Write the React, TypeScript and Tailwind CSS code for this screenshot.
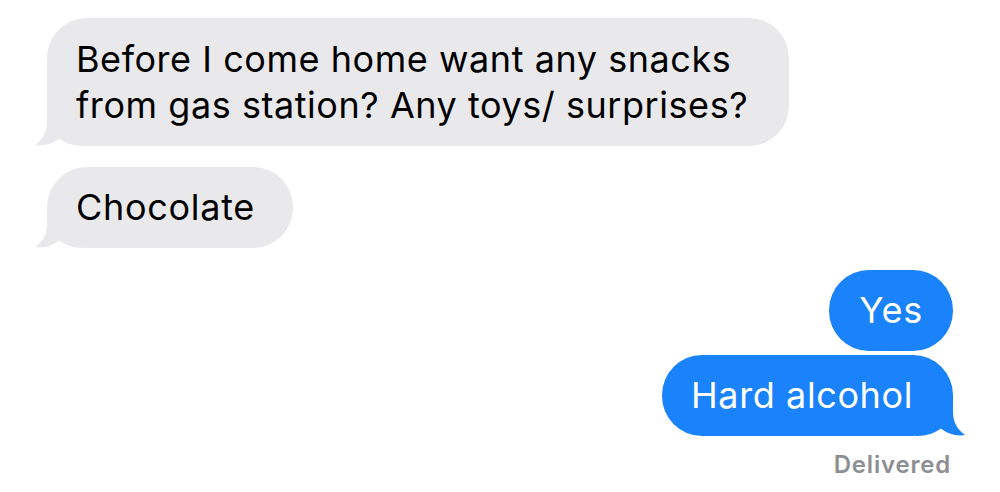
import React from "react";

function Tail({ color, flip }: { color: string; flip?: boolean }) {
  return (
    <svg
      viewBox="0 0 50 40"
      width={50}
      height={40}
      className={flip ? "absolute bottom-0 right-[-13px] -scale-x-100" : "absolute bottom-0 left-[-13px]"}
    >
      <path
        d="M13 0 L13 16 C13 27 8 34 1 39 C10 40.5 19 37.5 25 32.5 C31 37 39 40 50 40 L50 0 Z"
        fill={color}
      />
    </svg>
  );
}

export default function App() {
  const font = { fontFamily: "Inter, 'Noto Sans', sans-serif" };
  return (
    <div className="w-[1000px] h-[492px] bg-white flex flex-col px-[47px] pt-[18px]" style={font}>
      <div className="self-start relative">
        <Tail color="#e9e9eb" />
        <div className="relative bg-[#e9e9eb] rounded-[40px] pl-[29px] pr-[41px] py-[18px] text-[36px] leading-[46px] text-black tracking-[0.55px]">
          Before I come home want any snacks
          <br />
          from gas station? Any toys/ surprises?
        </div>
      </div>
      <div className="self-start relative mt-[21px]">
        <Tail color="#e9e9eb" />
        <div className="relative bg-[#e9e9eb] rounded-[40px] pl-[29px] pr-[38px] py-[18px] text-[36px] leading-[45px] text-black tracking-[0.7px]">
          Chocolate
        </div>
      </div>
      <div className="self-end relative mt-[22px]">
        <div className="relative bg-[#1a82fb] rounded-[40px] pl-[30px] pr-[30px] py-[18px] text-[36px] leading-[45px] text-white tracking-[0.7px]">
          Yes
        </div>
      </div>
      <div className="self-end relative mt-[4px]">
        <Tail color="#1a82fb" flip />
        <div className="relative bg-[#1a82fb] rounded-[40px] pl-[29px] pr-[40px] py-[18px] text-[36px] leading-[45px] text-white tracking-[0.6px]">
          Hard alcohol
        </div>
      </div>
      <div className="self-end mt-[15px] mr-[2px] text-[24px] leading-[28px] font-semibold text-[#8e8e93] tracking-[0.8px]">
        Delivered
      </div>
    </div>
  );
}
